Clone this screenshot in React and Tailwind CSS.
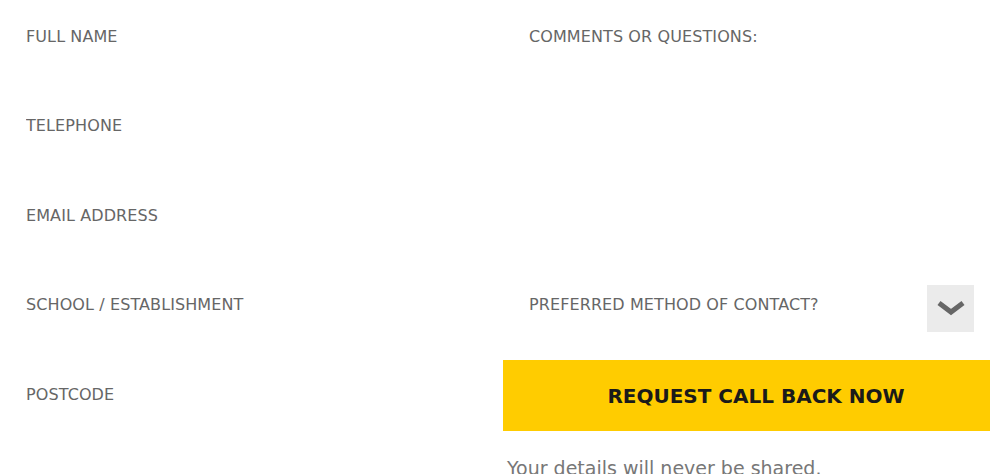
export default function App() {
  const left = ["FULL NAME", "TELEPHONE", "EMAIL ADDRESS", "SCHOOL / ESTABLISHMENT", "POSTCODE"];

  return (
    <div className="w-[991px] h-[474px] overflow-hidden bg-white font-['DejaVu_Sans',sans-serif]">
      <form className="grid grid-cols-[478px_487px] gap-x-[25px]">
        {/* LEFT */}
        <div className="flex flex-col gap-[17.5px]">
          {left.map(l => (
            <input
              key={l}
              placeholder={l}
              className="h-[72px] w-full bg-white px-[26px] text-[16px] tracking-[0.1px] text-[#666] placeholder:text-[#666] outline-none"
            />
          ))}
        </div>

        {/* RIGHT */}
        <div className="flex flex-col gap-[17.5px]">
          <textarea
            placeholder="COMMENTS OR QUESTIONS:"
            className="h-[251px] w-full resize-none bg-white px-[26px] pt-[26px] text-[16px] leading-[22px] tracking-[0.1px] text-[#666] placeholder:text-[#666] outline-none"
          />
          <div className="relative flex h-[72px] items-center px-[26px] text-[16px] tracking-[0.1px] text-[#666]">
            <span>PREFERRED METHOD OF CONTACT?</span>
            <div className="absolute right-[16px] top-[16px] flex h-[47px] w-[47px] items-center justify-center bg-[#ebebeb]">
              <svg width="30" height="16" viewBox="0 0 30 16">
                <polyline points="3,3 15,12 27,3" fill="none" stroke="#666" strokeWidth="5" />
              </svg>
            </div>
          </div>
          <button
            type="button"
            className="mt-[2px] h-[71px] w-full bg-[#ffcc00] pl-[19px] text-[20px] font-bold text-[#1a1a1a]"
          >
            REQUEST CALL BACK NOW
          </button>
          <p className="mt-[5px] pl-[4px] text-[19px] text-[#777]">Your details will never be shared.</p>
        </div>
      </form>
    </div>
  );
}
